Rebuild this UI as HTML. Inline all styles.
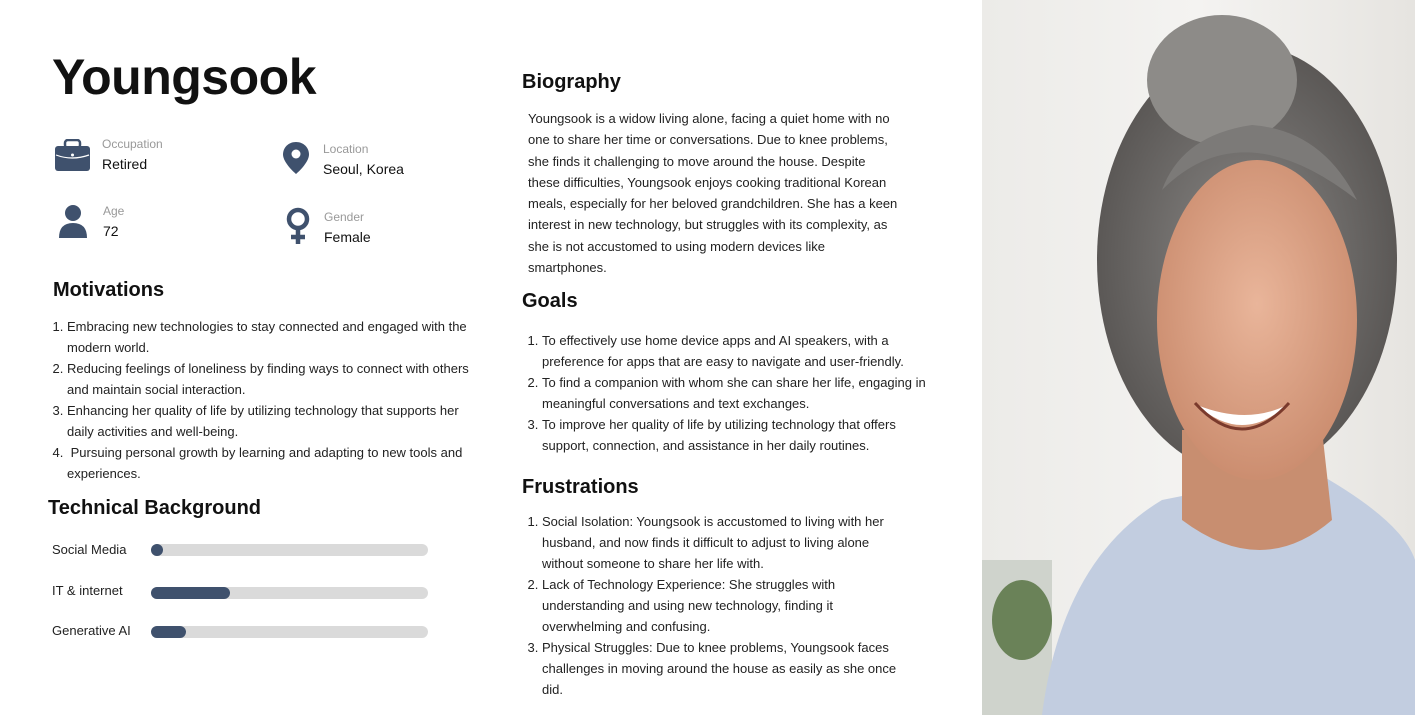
<!DOCTYPE html>
<html><head><meta charset="utf-8"><style>
*{margin:0;padding:0;box-sizing:border-box}
body{width:1415px;height:715px;background:#fff;font-family:"Liberation Sans",sans-serif;color:#111;position:relative;overflow:hidden}
.a{position:absolute}
h1{position:absolute;left:52px;top:48px;font-size:50px;font-weight:bold;letter-spacing:-0.5px}
h2{position:absolute;font-size:20px;font-weight:bold;color:#111}
.lab{font-size:12px;color:#999}
.val{font-size:14px;color:#111;margin-top:5px}
ol{position:absolute;font-size:13px;line-height:21px;color:#222;padding-left:15px}
.p{font-size:13px;line-height:21.3px;color:#222}
.bar{position:absolute;left:151px;width:277px;height:12px;border-radius:6px;background:#dadada}
.bar i{display:block;height:12px;border-radius:6px;background:#3f516d}
.bl{position:absolute;left:52px;font-size:13px;color:#222}
</style></head><body>
<h1>Youngsook</h1>

<svg class="a" style="left:54px;top:139px" width="37" height="33" viewBox="0 0 37 33"><rect x="11" y="1" width="15" height="8" rx="3" fill="none" stroke="#3f516d" stroke-width="2.5"/><rect x="1" y="7" width="35" height="25" rx="3" fill="#3f516d"/><path d="M2 16 Q18 22 35 16" stroke="#fff" stroke-width="1.2" fill="none"/><circle cx="18.5" cy="16" r="1.5" fill="#fff"/></svg>
<div class="a" style="left:102px;top:137px"><div class="lab">Occupation</div><div class="val">Retired</div></div>

<svg class="a" style="left:282px;top:141px" width="28" height="34" viewBox="0 0 28 34"><path d="M14 1C6.5 1 1 6.5 1 13.5 1 22 14 33 14 33S27 22 27 13.5C27 6.5 21.5 1 14 1Z" fill="#3f516d"/><circle cx="14" cy="13" r="4.5" fill="#fff"/></svg>
<div class="a" style="left:323px;top:142px"><div class="lab">Location</div><div class="val">Seoul, Korea</div></div>

<svg class="a" style="left:58px;top:204px" width="30" height="34" viewBox="0 0 30 34"><circle cx="15" cy="9" r="8" fill="#3f516d"/><path d="M1 34 Q1 19 15 19 Q29 19 29 34Z" fill="#3f516d"/></svg>
<div class="a" style="left:103px;top:204px"><div class="lab">Age</div><div class="val">72</div></div>

<svg class="a" style="left:285px;top:207px" width="26" height="38" viewBox="0 0 26 38"><circle cx="13" cy="12" r="9" fill="none" stroke="#3f516d" stroke-width="4.5"/><path d="M13 21V37M6 30H20" stroke="#3f516d" stroke-width="4.5"/></svg>
<div class="a" style="left:324px;top:210px"><div class="lab">Gender</div><div class="val">Female</div></div>

<h2 style="left:53px;top:279px">Motivations</h2>
<ol style="left:52px;top:316px;width:418px">
<li>Embracing new technologies to stay connected and engaged with the modern world.</li>
<li>Reducing feelings of loneliness by finding ways to connect with others and maintain social interaction.</li>
<li>Enhancing her quality of life by utilizing technology that supports her daily activities and well-being.</li>
<li>&nbsp;Pursuing personal growth by learning and adapting to new tools and experiences.</li>
</ol>

<h2 style="left:48px;top:497px">Technical Background</h2>
<div class="bl" style="top:542px">Social Media</div><div class="bar" style="top:544px"><i style="width:12px"></i></div>
<div class="bl" style="top:583px">IT &amp; internet</div><div class="bar" style="top:587px"><i style="width:79px"></i></div>
<div class="bl" style="top:623px">Generative AI</div><div class="bar" style="top:626px"><i style="width:35px"></i></div>

<h2 style="left:522px;top:71px">Biography</h2>
<div class="a p" style="left:528px;top:108px;width:372px">Youngsook is a widow living alone, facing a quiet home with no one to share her time or conversations. Due to knee problems, she finds it challenging to move around the house. Despite these difficulties, Youngsook enjoys cooking traditional Korean meals, especially for her beloved grandchildren. She has a keen interest in new technology, but struggles with its complexity, as she is not accustomed to using modern devices like smartphones.</div>

<h2 style="left:522px;top:290px">Goals</h2>
<ol style="left:527px;top:330px;width:410px">
<li>To effectively use home device apps and AI speakers, with a preference for apps that are easy to navigate and user-friendly.</li>
<li>To find a companion with whom she can share her life, engaging in meaningful conversations and text exchanges.</li>
<li>To improve her quality of life by utilizing technology that offers support, connection, and assistance in her daily routines.</li>
</ol>

<h2 style="left:522px;top:476px">Frustrations</h2>
<ol style="left:527px;top:511px;width:385px">
<li>Social Isolation: Youngsook is accustomed to living with her husband, and now finds it difficult to adjust to living alone without someone to share her life with.</li>
<li>Lack of Technology Experience: She struggles with understanding and using new technology, finding it overwhelming and confusing.</li>
<li>Physical Struggles: Due to knee problems, Youngsook faces challenges in moving around the house as easily as she once did.</li>
</ol>

<svg class="a" style="left:982px;top:0" width="433" height="715" viewBox="0 0 433 715">
<defs>
<linearGradient id="bg" x1="0" x2="1"><stop offset="0" stop-color="#ecebe8"/><stop offset="0.5" stop-color="#f4f3f1"/><stop offset="1" stop-color="#e6e4e0"/></linearGradient>
<radialGradient id="sk" cx="0.5" cy="0.45" r="0.6"><stop offset="0" stop-color="#e9b59a"/><stop offset="1" stop-color="#c98a6c"/></radialGradient>
<radialGradient id="hr" cx="0.5" cy="0.5" r="0.5"><stop offset="0" stop-color="#8a8886"/><stop offset="1" stop-color="#5b5856"/></radialGradient>
</defs>
<rect width="433" height="715" fill="url(#bg)"/>
<rect x="0" y="560" width="70" height="155" fill="#cfd3cc"/>
<ellipse cx="40" cy="620" rx="30" ry="40" fill="#6a8258"/>
<ellipse cx="265" cy="260" rx="150" ry="215" fill="url(#hr)"/>
<ellipse cx="240" cy="80" rx="75" ry="65" fill="#8d8b88"/>
<path d="M60 715 Q80 560 180 500 L330 470 Q420 520 433 560 L433 715Z" fill="#c2cde0"/>
<path d="M200 430 L340 430 L350 520 Q280 580 200 520Z" fill="#c88e70"/>
<ellipse cx="275" cy="320" rx="100" ry="160" fill="url(#sk)"/>
<path d="M180 190 Q260 110 375 200 Q340 130 270 125 Q200 135 180 190Z" fill="#7c7a78"/>
<path d="M215 405 Q260 445 305 405 Q265 425 215 405Z" fill="#fff"/>
<path d="M213 403 Q260 455 307 403" stroke="#7a3a2c" stroke-width="3" fill="none"/>
</svg>
</body></html>
